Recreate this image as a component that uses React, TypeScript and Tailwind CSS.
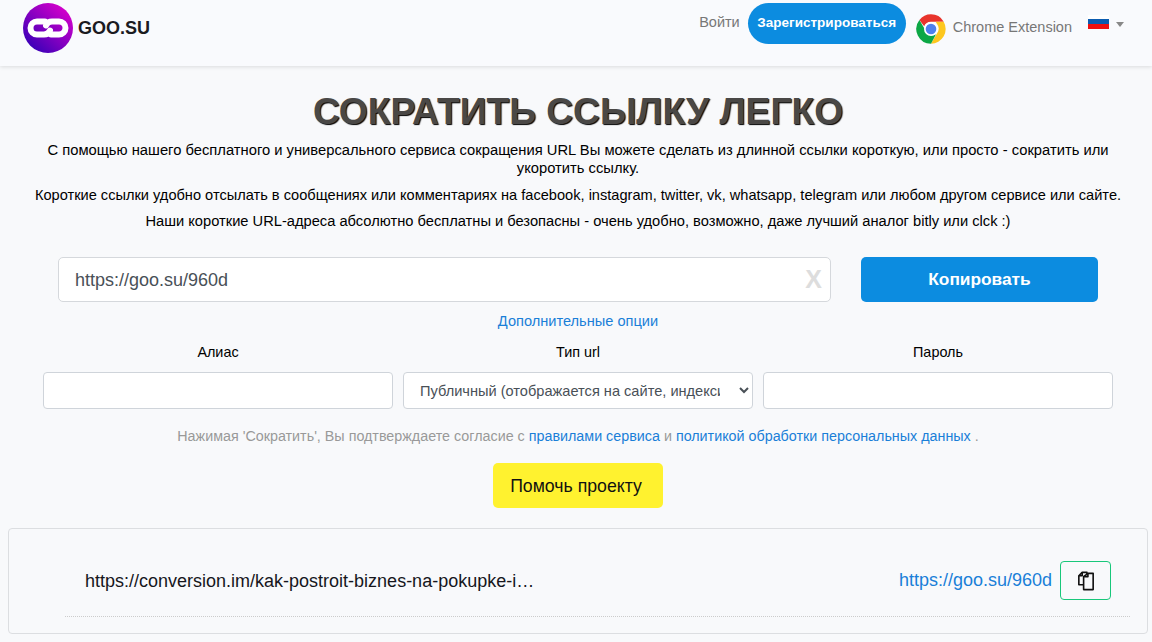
import React from "react";

function Logo() {
  return (
    <svg width="50" height="50" viewBox="0 0 50 50" className="shrink-0">
      <defs>
        <linearGradient id="lg" x1="0.9" y1="0.05" x2="0.15" y2="0.9">
          <stop offset="0" stopColor="#e000cc" />
          <stop offset="1" stopColor="#3a00b8" />
        </linearGradient>
      </defs>
      <circle cx="25" cy="25" r="25" fill="url(#lg)" />
      <g fill="none" stroke="#fff" strokeWidth="6" strokeLinecap="round">
        <path d="M22 18.5h-8a6.5 6.5 0 0 0 0 13h7a6.5 6.5 0 0 0 6-4" />
        <path d="M28 31.5h8a6.5 6.5 0 0 0 0-13h-7a6.5 6.5 0 0 0-6 4" />
      </g>
    </svg>
  );
}

function ChromeIcon() {
  return (
    <svg width="32" height="32" viewBox="0 0 48 48" className="shrink-0">
      <path d="M24 2a22 22 0 0 1 19.05 11H24a11 11 0 0 0-10.2 6.9L6.6 10.5A22 22 0 0 1 24 2z" fill="#e8342c" />
      <path d="M43.05 13A22 22 0 0 1 24 46l9.5-16.5A11 11 0 0 0 33 16.5L31 13z" fill="#fdc71f" />
      <path d="M24 46A22 22 0 0 1 6.6 10.5l9.9 17a11 11 0 0 0 15 4.5L24 46z" fill="#0ca745" />
      <circle cx="24" cy="24" r="10.5" fill="#fff" />
      <circle cx="24" cy="24" r="8" fill="#4f80ee" />
    </svg>
  );
}

function CopyIcon() {
  return (
    <svg width="18" height="21" viewBox="0 0 18 22" fill="none" stroke="#111" strokeWidth="1.7" strokeLinejoin="round">
      <path d="M6 15.5H1.5V6L5 2.5h5v4" />
      <path d="M5 2.5V6H1.5" />
      <path d="M6.5 7V20.5H16.5V3.5H11l-4.5 3.5z" fill="#f8f9fb" />
      <path d="M11 3.5V7H6.5" />
    </svg>
  );
}

export default function App() {
  return (
    <div className="h-[642px] w-[1152px] overflow-hidden bg-[#f8f9fb] font-['Liberation_Sans',Arial,sans-serif] text-black">
      <header className="flex h-[66px] items-start justify-between bg-[#f9fafd] pl-[23px] pr-[28px] pt-[3px] shadow-[0_1px_4px_rgba(0,0,0,0.12)]">
        <div className="flex items-center gap-[5px]">
          <Logo />
          <span className="text-[18px] font-bold text-[#1b1b1f]">GOO.SU</span>
        </div>
        <nav className="flex items-start">
          <span className="mt-[11px] text-[14.5px] leading-4 text-[#777]">Войти</span>
          <span className="ml-2 flex h-[41px] w-[158px] items-center justify-center rounded-[21px] bg-[#0c8ce0] text-[13.5px] font-bold text-white">
            Зарегистрироваться
          </span>
          <span className="ml-[9px] mt-[10px]">
            <ChromeIcon />
          </span>
          <span className="ml-[6px] mt-[16px] text-[14.5px] leading-4 text-[#777]">Chrome Extension</span>
          <span className="ml-4 mt-3 flex h-[14px] w-[21px] flex-col overflow-hidden">
            <span className="h-[4px] bg-white" />
            <span className="h-[5px] bg-[#0b5cb0]" />
            <span className="h-[5px] bg-[#ee1010]" />
          </span>
          <span className="ml-[7px] mt-[19px] h-0 w-0 border-x-[4.5px] border-t-[5px] border-x-transparent border-t-[#888]" />
        </nav>
      </header>

      <main className="flex flex-col items-center pl-1">
        <h1 className="mt-[24px] text-[37.2px] font-bold leading-[42px] text-[#4a4846] [text-shadow:1px_1px_1px_#000]">
          СОКРАТИТЬ ССЫЛКУ ЛЕГКО
        </h1>
        <div className="mt-[9px] w-[1100px] text-center text-[14.68px] leading-[18px]">
          <p className="text-[14.75px]">С помощью нашего бесплатного и универсального сервиса сокращения URL Вы можете сделать из длинной ссылки короткую, или просто - сократить или укоротить ссылку.</p>
          <p className="mt-[9px] text-[14.6px]">Короткие ссылки удобно отсылать в сообщениях или комментариях на facebook, instagram, twitter, vk, whatsapp, telegram или любом другом сервисе или сайте.</p>
          <p className="mt-[8px]">Наши короткие URL-адреса абсолютно бесплатны и безопасны - очень удобно, возможно, даже лучший аналог bitly или clck :)</p>
        </div>

        <div className="mt-[27px] flex w-[1040px] gap-[30px]">
          <div className="flex h-[45px] w-[773px] items-center justify-between rounded-[5px] border border-[#d5d8dc] bg-white pl-4 pr-[8px] pt-px text-[18px] text-[#495057]">
            <span>https://goo.su/960d</span>
            <span className="text-[25px] font-bold text-[#dddddd]">X</span>
          </div>
          <button className="h-[45px] w-[237px] rounded-[5px] bg-[#0c8ce0] pt-px text-[17.3px] font-bold text-white">Копировать</button>
        </div>

        <a className="mt-[11px] text-[14.6px] leading-4 text-[#1a7fd8]">Дополнительные опции</a>

        <div className="mt-[15px] grid w-[1070px] grid-cols-3 gap-[10px] text-center text-[14.4px]">
          <div className="flex flex-col gap-[11px]">
            <label className="leading-[17px]">Алиас</label>
            <input className="h-[37px] rounded-[4px] border border-[#cfd4da] bg-white" />
          </div>
          <div className="flex flex-col gap-[11px]">
            <label className="leading-[17px]">Тип url</label>
            <select className="h-[37px] rounded-[4px] border border-[#cfd4da] bg-white pl-3 pr-4 text-[14.6px] text-[#495057]">
              <option>Публичный (отображается на сайте, индексируется)</option>
            </select>
          </div>
          <div className="flex flex-col gap-[11px]">
            <label className="leading-[17px]">Пароль</label>
            <input className="h-[37px] rounded-[4px] border border-[#cfd4da] bg-white" />
          </div>
        </div>

        <p className="mt-[19px] text-[14.32px] leading-4 text-[#999]">
          Нажимая 'Сократить', Вы подтверждаете согласие с <a className="text-[#1a7fd8]">правилами сервиса</a> и{" "}
          <a className="text-[#1a7fd8]">политикой обработки персональных данных</a> .
        </p>

        <button className="mt-[19px] h-[45px] w-[170px] rounded-[5px] bg-[#fff22f] pr-1 pt-[2px] text-[17.7px] text-[#111]">Помочь проекту</button>

        <section className="mt-5 h-[106px] w-[1140px] shrink-0 rounded-[4px] border border-[#dcdee1] pl-[56px] pr-[17px]">
          <div className="flex h-[88px] items-center border-b border-dotted border-[#cccccc] pl-5 pr-[19px] pt-[18px] pb-[2px]">
            <span className="mt-[2px] whitespace-nowrap text-[18px] text-[#16161c]">https://conversion.im/kak-postroit-biznes-na-pokupke-i…</span>
            <a className="ml-auto text-[18px] text-[#1a7fd8]">https://goo.su/960d</a>
            <span className="ml-2 flex h-[39px] w-[51px] items-center justify-center rounded-[4px] border border-[#18c77a]">
              <CopyIcon />
            </span>
          </div>
        </section>
      </main>
    </div>
  );
}
